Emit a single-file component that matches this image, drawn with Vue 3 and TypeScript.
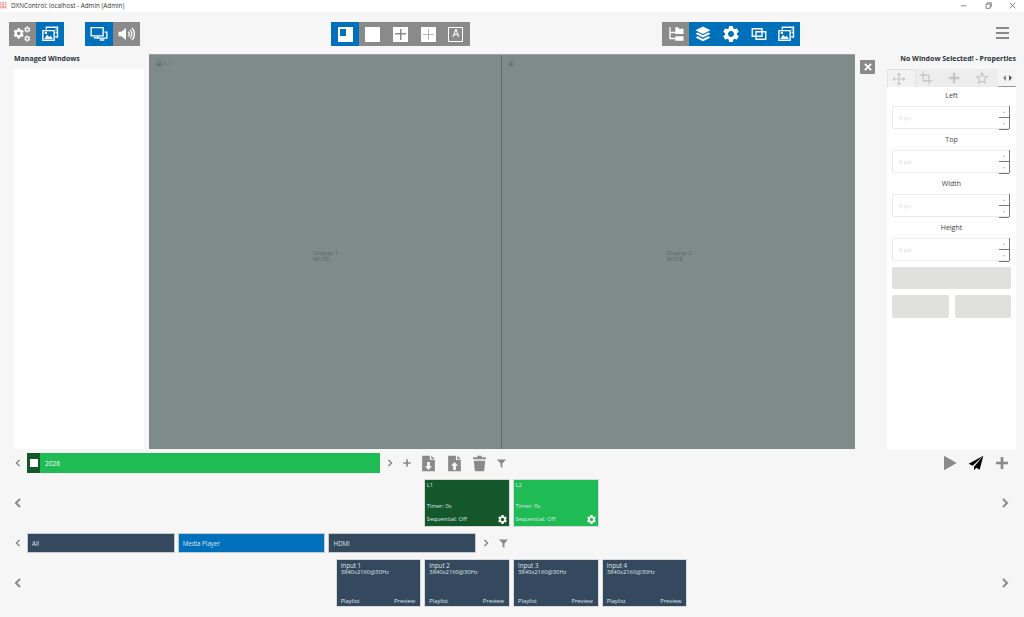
<script setup lang="ts">
interface Part {
  d: string;
  stroke?: boolean;
  t?: string;
}
interface Tool {
  icon: string;
  on?: boolean;
}

const GEAR =
  "M19.14 12.94c.04-.3.06-.61.06-.94 0-.32-.02-.64-.07-.94l2.03-1.58c.18-.14.23-.41.12-.61l-1.92-3.32c-.12-.22-.37-.29-.59-.22l-2.39.96c-.5-.38-1.03-.7-1.62-.94l-.36-2.54c-.04-.24-.24-.41-.48-.41h-3.84c-.24 0-.43.17-.47.41l-.36 2.54c-.59.24-1.13.57-1.62.94l-2.39-.96c-.22-.08-.47 0-.59.22L2.74 8.87c-.12.21-.08.47.12.61l2.03 1.58c-.05.3-.09.63-.09.94s.02.64.07.94l-2.03 1.58c-.18.14-.23.41-.12.61l1.92 3.32c.12.22.37.29.59.22l2.39-.96c.5.38 1.03.7 1.62.94l.36 2.54c.05.24.24.41.48.41h3.84c.24 0 .44-.17.47-.41l.36-2.54c.59-.24 1.13-.56 1.62-.94l2.39.96c.22.08.47 0 .59-.22l1.92-3.32c.12-.22.07-.47-.12-.61l-2.01-1.58zM12 15.6c-1.98 0-3.6-1.62-3.6-3.6s1.62-3.6 3.6-3.6 3.6 1.62 3.6 3.6-1.62 3.6-3.6 3.6z";

const icons: Record<string, Part[]> = {
  cogs: [
    { d: GEAR, t: "translate(-1 2.500) scale(.72)" },
    { d: GEAR, t: "translate(14 1) scale(.42)" },
    { d: GEAR, t: "translate(14 13) scale(.42)" },
  ],
  images: [
    { d: "M7 6V3h15v13h-3", stroke: true },
    { d: "M2.500 7.500h15v13h-15z", stroke: true },
    { d: "M4 19l4-6 3 3 2-2 3 5zM5 9h3v3H5z" },
    { d: "M19.500 5h1.500v2h-1.500zM19.500 9h1.500v2h-1.500z" },
  ],
  displays: [
    { d: "M1.500 3.500h16v11h-16zM19.500 9.500h3v8h-12v-3", stroke: true },
    { d: "M5 16h6v2H5zM13 19h6v2h-6z" },
  ],
  volume: [
    { d: "M2 9h4l6-5v16l-6-5H2z" },
    { d: "M15 9a4 4 0 0 1 0 6M17.500 6.500a8 8 0 0 1 0 11M20 4a11.500 11.500 0 0 1 0 16", stroke: true },
  ],
  tree: [
    { d: "M4 3v15h7M4 10h7", stroke: true },
    { d: "M11 3h4l1 2h6v7H11zM11 15h11v6H11z" },
  ],
  layers: [
    { d: "M12 2l10 5-10 5L2 7z" },
    { d: "M2 11.500l3-1.500 7 3.500 7-3.500 3 1.500-10 5z" },
    { d: "M2 16.500l3-1.500 7 3.500 7-3.500 3 1.500-10 5z" },
  ],
  gear: [{ d: GEAR, t: "translate(-1.200 -1.200) scale(1.100)" }],
  windows: [{ d: "M3 5h13v10H3zM8 9h13v10H8z", stroke: true }],
  move: [
    {
      d: "M12 1l4 4h-3v6h6V8l4 4-4 4v-3h-6v6h3l-4 4-4-4h3v-6H5v3l-4-4 4-4v3h6V5H8z",
    },
  ],
  crop: [{ d: "M7 1v16h16M1 7h16v16", stroke: true }],
  plus: [{ d: "M10 3h4v7h7v4h-7v7h-4v-7H3v-4h7z" }],
  star: [{ d: "M12 3l2.800 6 6.200.8-4.500 4.300 1.100 6.400L12 17.400l-5.600 3.100 1.100-6.400L3 9.800 9.200 9z", stroke: true }],
  download: [{ d: "M3 1h11v6h7v16H3zM16 1l5 5h-5zM10 10v6H7l5 5 5-5h-3v-6z" }],
  upload: [{ d: "M3 1h11v6h7v16H3zM16 1l5 5h-5zM12 10l-5 5h3v6h4v-6h3z" }],
  trash: [{ d: "M3 3h6V1h6v2h6v3H3zM4 8h16l-1.500 15h-13z" }],
  filter: [{ d: "M2 3h20l-8 9v10l-4-3v-7z" }],
  play: [{ d: "M3 1l19 11L3 23z" }],
  plane: [{ d: "M23 1L1 13l6 3zM23 1L9 17.500V23l3.500-4 5 3z" }],
  lock: [
    { d: "M7 11V7a5 5 0 0 1 10 0v4", stroke: true },
    { d: "M4 11h16v11H4z" },
  ],
  unlock: [
    { d: "M10 11V6.500a4.500 4.500 0 0 1 9 0V8", stroke: true },
    { d: "M2 11h13v11H2z" },
  ],
  close: [{ d: "M6 3l6 6 6-6 3 3-6 6 6 6-3 3-6-6-6 6-3-3 6-6-6-6z" }],
};

const leftA: Tool[] = [{ icon: "cogs" }, { icon: "images", on: true }];
const leftB: Tool[] = [{ icon: "displays", on: true }, { icon: "volume" }];
const rightTools: Tool[] = [
  { icon: "tree" },
  { icon: "layers", on: true },
  { icon: "gear", on: true },
  { icon: "windows", on: true },
  { icon: "images", on: true },
];

const displays = [
  { name: "Display 1", locked: true, label: "2.2" },
  { name: "Display 2", locked: false, label: "" },
];
const tabs = ["move", "crop", "plus", "star"];
const fields = ["Left", "Top", "Width", "Height"];
const layouts = [
  { name: "L1", dark: true },
  { name: "L2", dark: false },
];
const sources = [
  { name: "All", on: false },
  { name: "Media Player", on: true },
  { name: "HDMI", on: false },
];
const inputs = ["Input 1", "Input 2", "Input 3", "Input 4"];
</script>

<template>
  <div class="app">
    <header class="titlebar">
      <span class="app-logo"></span>
      <span class="title-text">DXNControl: localhost - Admin (Admin)</span>
      <div class="win-btns">
        <svg viewBox="0 0 10 10"><path d="M1 5.500h8" /></svg>
        <svg viewBox="0 0 10 10"><path d="M1.500 3h6v6h-6zM3.500 3V1h5.500v5.500H7.500" /></svg>
        <svg viewBox="0 0 10 10"><path d="M1 1l8 8M9 1l-8 8" /></svg>
      </div>
    </header>

    <div class="toolbar">
      <div class="tools">
        <button v-for="t in leftA" :key="t.icon" class="tool" :class="{ on: t.on }">
          <svg viewBox="0 0 24 24" class="ic">
            <path v-for="(p, i) in icons[t.icon]" :key="i" :d="p.d" :transform="p.t" :class="{ line: p.stroke }" />
          </svg>
        </button>
      </div>
      <div class="tools second">
        <button v-for="t in leftB" :key="t.icon" class="tool" :class="{ on: t.on }">
          <svg viewBox="0 0 24 24" class="ic">
            <path v-for="(p, i) in icons[t.icon]" :key="i" :d="p.d" :transform="p.t" :class="{ line: p.stroke }" />
          </svg>
        </button>
      </div>
      <div class="tools mid">
        <button class="tool on">
          <span class="box"><span class="box-notch"></span></span>
        </button>
        <button class="tool"><span class="box"></span></button>
        <button class="tool">
          <span class="box"><span class="cross"></span></span>
        </button>
        <button class="tool">
          <span class="box"><span class="cross thin"></span></span>
        </button>
        <button class="tool">
          <span class="box letter"><span>A</span></span>
        </button>
      </div>
      <div class="tools end">
        <button v-for="t in rightTools" :key="t.icon" class="tool" :class="{ on: t.on }">
          <svg viewBox="0 0 24 24" class="ic">
            <path v-for="(p, i) in icons[t.icon]" :key="i" :d="p.d" :transform="p.t" :class="{ line: p.stroke }" />
          </svg>
        </button>
      </div>
      <div class="burger"><i></i><i></i><i></i></div>
    </div>

    <main class="main">
      <aside class="managed">
        <div class="heading">Managed Windows</div>
        <div class="managed-list"></div>
      </aside>

      <section class="stage">
        <div v-for="d in displays" :key="d.name" class="display">
          <div class="display-tag">
            <svg viewBox="0 0 24 24" class="tag-ic">
              <path
                v-for="(p, i) in icons[d.locked ? 'lock' : 'unlock']"
                :key="i"
                :d="p.d"
                :class="{ line: p.stroke }"
              />
            </svg>
            {{ d.label }}
          </div>
          <div class="display-name">{{ d.name }}<br />MUTE</div>
        </div>
      </section>

      <button class="close-btn">
        <svg viewBox="0 0 24 24"><path :d="icons.close[0].d" /></svg>
      </button>

      <aside class="props">
        <div class="heading right">No Window Selected! - Properties</div>
        <div class="prop-tabs">
          <div v-for="(t, n) in tabs" :key="t" class="prop-tab" :class="{ current: n === 0 }">
            <svg viewBox="0 0 24 24">
              <path v-for="(p, i) in icons[t]" :key="i" :d="p.d" :class="{ line: p.stroke }" />
            </svg>
          </div>
          <div class="tab-scroll"><span class="tri-l"></span><span class="tri-r"></span></div>
        </div>
        <div class="prop-body">
          <div v-for="f in fields" :key="f" class="field">
            <label>{{ f }}</label>
            <div class="num">
              <span>0 px</span>
              <div class="spin"><b>▴</b><b>▾</b></div>
            </div>
          </div>
          <div class="ghost wide"></div>
          <div class="ghost-row">
            <div class="ghost"></div>
            <div class="ghost"></div>
          </div>
        </div>
      </aside>
    </main>

    <div class="row scenes">
      <svg viewBox="0 0 6 8" class="chev sm"><path d="M4.500 1L1.500 4l3 3" /></svg>
      <div class="scene-bar">
        <span class="scene-check"><i></i></span>
        <span>2026</span>
      </div>
      <svg viewBox="0 0 6 8" class="chev sm next"><path d="M1.500 1l3 3-3 3" /></svg>
      <svg viewBox="0 0 24 24" class="act plus"><path :d="icons.plus[0].d" /></svg>
      <svg viewBox="0 0 24 24" class="act doc"><path :d="icons.download[0].d" fill-rule="evenodd" /></svg>
      <svg viewBox="0 0 24 24" class="act doc"><path :d="icons.upload[0].d" fill-rule="evenodd" /></svg>
      <svg viewBox="0 0 24 24" class="act doc"><path :d="icons.trash[0].d" /></svg>
      <svg viewBox="0 0 24 24" class="act funnel"><path :d="icons.filter[0].d" /></svg>
      <div class="send">
        <svg viewBox="0 0 24 24" class="send-ic"><path :d="icons.play[0].d" /></svg>
        <svg viewBox="0 0 24 24" class="send-ic black"><path :d="icons.plane[0].d" /></svg>
        <svg viewBox="0 0 24 24" class="send-ic"><path :d="icons.plus[0].d" /></svg>
      </div>
    </div>

    <div class="row strip">
      <svg viewBox="0 0 8 10" class="chev big"><path d="M6 1L2 5l4 4" /></svg>
      <div class="cards">
        <div v-for="l in layouts" :key="l.name" class="card" :class="l.dark ? 'dark' : 'green'">
          <div>{{ l.name }}</div>
          <div class="timer">Timer: 0s</div>
          <div class="seq">
            <span>Sequential: Off</span>
            <svg viewBox="0 0 24 24"><path :d="GEAR" /></svg>
          </div>
        </div>
      </div>
      <svg viewBox="0 0 8 10" class="chev big"><path d="M2 1l4 4-4 4" /></svg>
    </div>

    <div class="row sources">
      <svg viewBox="0 0 6 8" class="chev sm"><path d="M4.500 1L1.500 4l3 3" /></svg>
      <div v-for="s in sources" :key="s.name" class="source" :class="{ on: s.on }">{{ s.name }}</div>
      <svg viewBox="0 0 6 8" class="chev sm next"><path d="M1.500 1l3 3-3 3" /></svg>
      <svg viewBox="0 0 24 24" class="act funnel"><path :d="icons.filter[0].d" /></svg>
    </div>

    <div class="row strip inputs">
      <svg viewBox="0 0 8 10" class="chev big"><path d="M6 1L2 5l4 4" /></svg>
      <div class="cards">
        <div v-for="n in inputs" :key="n" class="card slate">
          <div class="in-name">{{ n }}</div>
          <div class="in-res">3840x2160@30Hz</div>
          <div class="in-foot">
            <span>Playlist</span>
            <span>Preview</span>
          </div>
        </div>
      </div>
      <svg viewBox="0 0 8 10" class="chev big"><path d="M2 1l4 4-4 4" /></svg>
    </div>
  </div>
</template>

<style scoped>
.app {
  width: 1024px;
  height: 617px;
  overflow: hidden;
  background: #f6f6f6;
  font-family: "Open Sans", "Liberation Sans", sans-serif;
  color: #2b3440;
}

svg {
  display: block;
  fill: currentColor;
}
svg .line {
  fill: none;
  stroke: currentColor;
  stroke-width: 1.800;
}

.titlebar {
  height: 12px;
  background: #fff;
  display: flex;
  align-items: center;
  padding-bottom: 1px;
  box-sizing: border-box;
  font-size: 6.300px;
  color: #333;
}
.app-logo {
  width: 7px;
  height: 7px;
  margin-right: 4px;
  background:
    repeating-linear-gradient(0deg, #fbdcdc 0 1px, transparent 1px 2.500px),
    repeating-linear-gradient(90deg, #ee9a9a 0 1.500px, #fbdcdc 1.500px 2.500px);
}
.win-btns {
  margin-left: auto;
  display: flex;
  gap: 17.500px;
  padding-right: 8px;
}
.win-btns svg {
  width: 7px;
  height: 7px;
  fill: none;
  stroke: #555;
  stroke-width: 1;
}

.toolbar {
  height: 42px;
  display: flex;
  align-items: flex-start;
  padding: 10px 15px 0 8.500px;
  box-sizing: border-box;
}
.tools {
  display: flex;
  height: 24px;
}
.second {
  margin-left: 21px;
}
.mid {
  margin-left: 191px;
}
.end {
  margin-left: 192px;
}
.tool {
  width: 27.700px;
  height: 24px;
  padding: 0;
  border: 0;
  background: #8a8a8a;
  color: #fff;
  display: flex;
  align-items: center;
  justify-content: center;
}
.tool.on {
  background: #0070ba;
}
.ic {
  width: 18px;
  height: 18px;
}
.box {
  position: relative;
  width: 15px;
  height: 15px;
  background: #fff;
  display: block;
}
.box-notch {
  position: absolute;
  left: 2px;
  top: 2px;
  width: 11px;
  height: 11px;
  background:
    linear-gradient(#fff 0 0) 100% 100% / 5px 11px no-repeat,
    linear-gradient(#fff 0 0) 0 100% / 11px 4px no-repeat,
    #0070ba;
}
.cross {
  position: absolute;
  inset: 2px;
  background:
    linear-gradient(#8a8a8a 0 0) center / 100% 1.500px no-repeat,
    linear-gradient(#8a8a8a 0 0) center / 1.500px 100% no-repeat;
}
.cross.thin {
  background:
    linear-gradient(#b5b5b5 0 0) center / 100% 1px no-repeat,
    linear-gradient(#b5b5b5 0 0) center / 1px 100% no-repeat;
}
.letter {
  background: #8a8a8a;
  border: 1.500px solid #fff;
  box-sizing: border-box;
  color: #fff;
  font-size: 10px;
  line-height: 12px;
  text-align: center;
}
.burger {
  margin-left: auto;
  width: 13px;
  padding-top: 5px;
  display: flex;
  flex-direction: column;
  gap: 3px;
}
.burger i {
  height: 2px;
  background: #8a8a8a;
}

.main {
  display: flex;
  height: 395px;
  padding-left: 14px;
}
.heading {
  height: 15px;
  font-size: 7px;
  font-weight: 700;
  line-height: 10px;
  color: #2b3440;
}
.heading.right {
  text-align: right;
  white-space: nowrap;
}
.managed {
  width: 130px;
  display: flex;
  flex-direction: column;
}
.managed-list {
  flex: 1;
  background: #fff;
}
.stage {
  width: 706px;
  margin-left: 5px;
  display: flex;
  background: #7e8b8a;
  border-top: 1px solid #9aa3a2;
  box-sizing: border-box;
}
.display {
  width: 352px;
  position: relative;
  color: #5c6766;
  font-size: 6px;
  line-height: 6.500px;
  padding-top: 8px;
  box-sizing: border-box;
  display: flex;
  align-items: center;
  justify-content: center;
}
.display + .display {
  flex: 1;
  border-left: 1.500px solid #606c6b;
}
.display-name {
  width: 24px;
  white-space: nowrap;
}
.display-tag {
  position: absolute;
  left: 6px;
  top: 4px;
  display: flex;
  align-items: center;
  color: #6a7574;
}
.tag-ic {
  width: 8px;
  height: 8px;
}
.close-btn {
  width: 15px;
  height: 14px;
  margin: 6px 0 0 5px;
  padding: 0;
  border: 0;
  border-radius: 1px;
  background: #8a8a8a;
  color: #fff;
  display: flex;
  align-items: center;
  justify-content: center;
}
.close-btn svg {
  width: 10px;
  height: 10px;
}
.props {
  width: 129px;
  margin-left: 12px;
  display: flex;
  flex-direction: column;
}
.prop-tabs {
  height: 18px;
  display: flex;
  background: #f0f0f0;
}
.prop-tab {
  width: 28px;
  padding-right: 6px;
  box-sizing: border-box;
  color: #c4c4c4;
  background: #ededed;
  display: flex;
  align-items: center;
  justify-content: center;
}
.prop-tab.current {
  width: 29px;
  padding-right: 4px;
  background: #f2f2f2;
  border: 1px solid #e3e3e3;
  border-bottom: 0;
}
.prop-tab svg {
  width: 14px;
  height: 14px;
}
.prop-tab svg .line {
  stroke-width: 2;
}
.tab-scroll {
  width: 18px;
  margin-left: auto;
  background: #f4f4f4;
  border-bottom: 1px solid #999;
  box-sizing: border-box;
  display: flex;
  align-items: center;
  justify-content: center;
  gap: 3px;
}
.tri-l,
.tri-r {
  border: 3px solid transparent;
}
.tri-l {
  border-left: 0;
  border-right-color: #888;
}
.tri-r {
  border-right: 0;
  border-left-color: #555;
}
.prop-body {
  flex: 1;
  background: #fff;
  padding: 4px 5px 0;
}
.field {
  height: 44px;
  display: flex;
  flex-direction: column;
  color: #444;
}
.field label {
  height: 15px;
  font-size: 7px;
  line-height: 10px;
  text-align: center;
}
.num {
  height: 23px;
  width: 118px;
  box-sizing: border-box;
  border: 1px solid #eaeaea;
  border-radius: 2px;
  display: flex;
  align-items: center;
  justify-content: space-between;
  padding-left: 6px;
  font-size: 6px;
  color: #d8d8d8;
}
.spin {
  width: 11px;
  height: 23px;
  margin-right: -1px;
  border-right: 1px solid #777;
  display: flex;
  flex-direction: column;
  font-size: 4px;
  box-sizing: border-box;
}
.spin b {
  flex: 1;
  font-weight: 400;
  color: #bbb;
  text-align: center;
  line-height: 11px;
  border-bottom: 1px solid #777;
}
.ghost {
  flex: 1;
  background: #e0e0de;
  border-radius: 2px;
}
.ghost.wide {
  height: 22px;
  width: 119px;
}
.ghost-row {
  display: flex;
  gap: 6px;
  width: 119px;
  height: 23px;
  margin-top: 6px;
}

.row {
  display: flex;
  align-items: center;
  padding-left: 14px;
}
.chev {
  flex: none;
  fill: none;
  stroke: #8a8a8a;
}
.chev.big {
  width: 8px;
  height: 10px;
  stroke-width: 2;
  margin-right: 5px;
}
.chev.big:last-child {
  margin-right: 0;
  margin-left: 5px;
}
.chev.sm {
  width: 6px;
  height: 8px;
  stroke-width: 1.500;
  margin: 0 6px 0 1px;
}
.chev.sm.next {
  margin: 0 9px 0 7px;
}
.scenes {
  height: 20px;
  margin-top: 4px;
}
.scene-bar {
  width: 353px;
  height: 20px;
  background: #1fbb55;
  color: #fff;
  font-size: 6.500px;
  display: flex;
  align-items: center;
  gap: 5px;
}
.scene-check {
  width: 13px;
  height: 20px;
  background: #14572b;
  display: flex;
  align-items: center;
  justify-content: center;
}
.scene-check i {
  width: 8px;
  height: 8px;
  background: #fff;
}
.act {
  flex: none;
  color: #8a8a8a;
}
.act.plus {
  width: 10px;
  height: 10px;
}
.act.doc {
  width: 17px;
  height: 17px;
  margin-left: 8.300px;
}
.act.funnel {
  width: 11px;
  height: 11px;
  margin-left: 8px;
}
.send {
  margin-left: auto;
  padding-right: 14px;
  display: flex;
  gap: 10px;
  color: #8a8a8a;
}
.send-ic {
  width: 16px;
  height: 16px;
}
.send-ic.black {
  color: #000;
}

.strip {
  height: 48px;
  margin-top: 6px;
  padding-right: 15px;
}
.cards {
  flex: 1;
  display: flex;
  justify-content: center;
  gap: 3px;
  height: 48px;
}
.card {
  width: 85.700px;
  height: 48px;
  box-sizing: border-box;
  border: 1px solid #d6dadd;
  padding: 2px 4px 3px;
  color: #dfe6ea;
  font-size: 5.800px;
  line-height: 7px;
  display: flex;
  flex-direction: column;
}
.card.dark,
.card.green {
  padding-left: 1.500px;
}
.card.dark {
  background: #14572b;
}
.card.green {
  background: #1fbb55;
}
.card.slate {
  background: #34495e;
  padding-bottom: 1px;
}
.timer {
  margin-top: 14px;
}
.seq {
  margin-top: auto;
  display: flex;
  align-items: center;
  justify-content: space-between;
  margin-right: -3px;
  margin-bottom: -2px;
}
.seq svg {
  width: 11px;
  height: 11px;
  color: #fff;
}
.in-name {
  font-size: 6.200px;
}
.in-foot {
  margin-top: auto;
  display: flex;
  justify-content: space-between;
  padding-right: 1px;
}

.sources {
  height: 20px;
  margin-top: 6px;
}
.source {
  width: 147.700px;
  height: 20px;
  box-sizing: border-box;
  border: 1px solid #c4cbd1;
  background: #34495e;
  color: #dfe6ea;
  padding-left: 4px;
  font-size: 6.200px;
  line-height: 19px;
}
.source + .source {
  margin-left: 3px;
}
.source.on {
  background: #0070ba;
}
.sources .funnel {
  margin-left: 0;
}
.inputs {
  margin-top: 6px;
}
</style>
